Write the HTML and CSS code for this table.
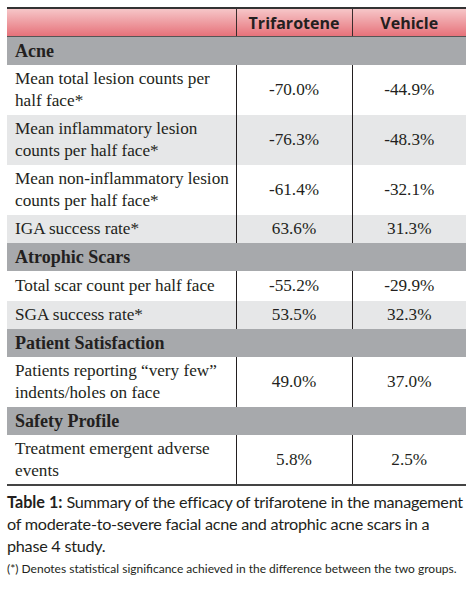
FILE: index.html
```html
<!DOCTYPE html>
<html>
<head>
<meta charset="utf-8">
<link rel="stylesheet" href="styles.css">
</head>
<body>
<div class="page">
  <table class="data">
    <colgroup>
      <col class="c1"><col class="c2"><col class="c3">
    </colgroup>
    <thead>
      <tr class="head">
        <th></th><th>Trifarotene</th><th>Vehicle</th>
      </tr>
    </thead>
    <tbody>
      <tr class="sec"><td colspan="3">Acne</td></tr>
      <tr class="two"><td>Mean total lesion counts per half face*</td><td>-70.0%</td><td>-44.9%</td></tr>
      <tr class="two alt"><td>Mean inflammatory lesion counts per half face*</td><td>-76.3%</td><td>-48.3%</td></tr>
      <tr class="two"><td>Mean non-inflammatory lesion counts per half face*</td><td>-61.4%</td><td>-32.1%</td></tr>
      <tr class="one alt"><td>IGA success rate*</td><td>63.6%</td><td>31.3%</td></tr>
      <tr class="sec"><td colspan="3">Atrophic Scars</td></tr>
      <tr class="one tall"><td>Total scar count per half face</td><td>-55.2%</td><td>-29.9%</td></tr>
      <tr class="one alt"><td>SGA success rate*</td><td>53.5%</td><td>32.3%</td></tr>
      <tr class="sec"><td colspan="3">Patient Satisfaction</td></tr>
      <tr class="two"><td>Patients reporting “very few” indents/holes on face</td><td>49.0%</td><td>37.0%</td></tr>
      <tr class="sec"><td colspan="3">Safety Profile</td></tr>
      <tr class="two last"><td>Treatment emergent adverse events</td><td>5.8%</td><td>2.5%</td></tr>
    </tbody>
  </table>
  <p class="caption"><b>Table 1:</b> Summary of the efficacy of trifarotene in the management of moderate-to-severe facial acne and atrophic acne scars in a phase 4 study.</p>
  <p class="note">(*) Denotes statistical significance achieved in the difference between the two groups.</p>
</div>
</body>
</html>
```
FILE: styles.css
```css
html, body {
  margin: 0;
  padding: 0;
  background: #ffffff;
}
.page {
  padding: 7px 8px 0 7px;
  width: 459px;
}
.data {
  border-collapse: collapse;
  width: 459px;
  table-layout: fixed;
  font-family: "Liberation Serif", serif;
  font-size: 17.2px;
  color: #231f20;
  border-top: 2px solid #333;
  border-bottom: 2px solid #444;
}
.c1 { width: 229px; }
.c2 { width: 116px; }
.c3 { width: 114px; }
.head th {
  height: 27px;
  padding: 0;
  background: linear-gradient(#f6c6c8, #e6727a);
  font-family: "Open Sans", "Liberation Sans", sans-serif;
  font-weight: 700;
  font-size: 16px;
  border-bottom: 1px solid #555;
  text-align: center;
  vertical-align: middle;
}
.head th + th {
  border-left: 1px solid #3a2c2c;
}
.data td {
  padding: 0 0 0 8px;
  vertical-align: middle;
  line-height: 22px;
}
.data td + td {
  text-align: center;
  padding: 0;
  border-left: 1px solid #231f20;
}
.sec td {
  background: #a7a9ac;
  font-weight: 700;
  height: 28px;
  font-size: 18px;
}
.two td { height: 50px; }
.one td { height: 28px; }
.one.tall td { height: 30px; }
.alt td { background: #e6e7e8; }
.last td { height: 49px; }
.caption {
  margin: 5px 0 0 0;
  font-family: Lato, "Liberation Sans", sans-serif;
  font-size: 16.2px;
  letter-spacing: -0.25px;
  line-height: 22px;
  color: #231f20;
}
.caption b {
  font-weight: 700;
  letter-spacing: 0;
}
.note {
  margin: 4px 0 0 0;
  font-family: Lato, "Liberation Sans", sans-serif;
  font-size: 12px;
  line-height: 16px;
  white-space: nowrap;
  color: #231f20;
}
```
